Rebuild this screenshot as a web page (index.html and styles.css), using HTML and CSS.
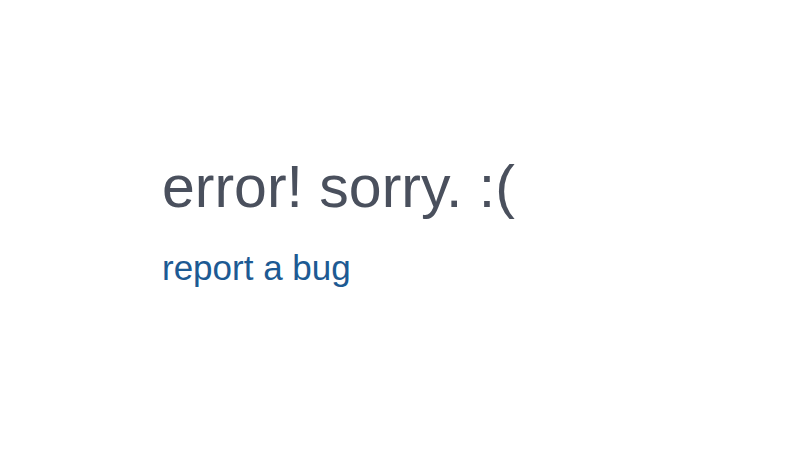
FILE: index.html
```html
<!DOCTYPE html>
<html lang="en">
<head>
    <meta charset="UTF-8">
    <meta name="viewport" content="width=device-width, initial-scale=1.0">
    <title>Error</title>
    <link rel="stylesheet" href="styles.css">
</head>
<body>
    <div class="error-page">
        <h1 class="error-title">error! sorry. :(</h1>
        <a class="bug-link" href="#">report a bug</a>
    </div>
</body>
</html>
```

FILE: styles.css
```css
body {
    font-family: "Liberation Sans", Arial, sans-serif;
    margin: 0;
    background-color: #fff;
}
.error-page {
    min-height: 100vh;
    display: flex;
    flex-direction: column;
    justify-content: center;
    align-items: flex-start;
    padding-left: 162px;
    padding-bottom: 8px;
    box-sizing: border-box;
}
.error-title {
    margin: 0;
    font-size: 59px;
    font-weight: normal;
    line-height: 66px;
    color: #4a505d;
}
.bug-link {
    margin-top: 28px;
    font-size: 35px;
    line-height: 40px;
    color: #1d5a93;
    text-decoration: none;
}
```
